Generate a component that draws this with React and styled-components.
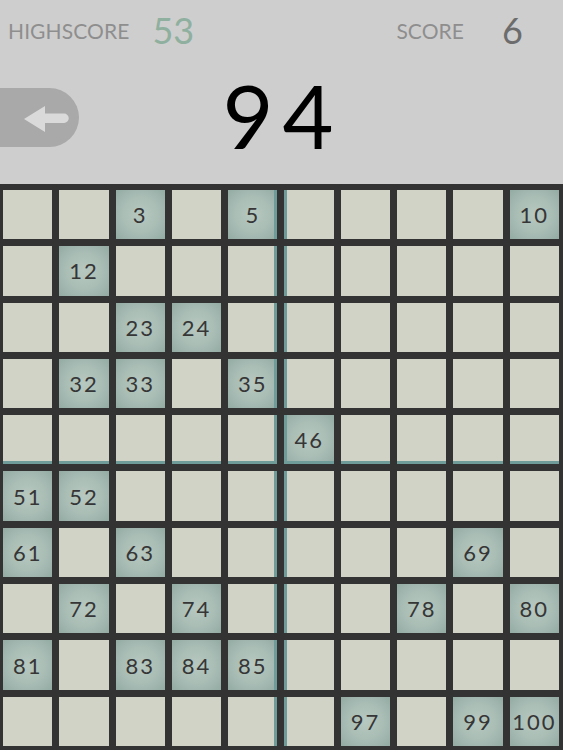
import React from "react";
import styled, { createGlobalStyle } from "styled-components";

const GlobalStyle = createGlobalStyle`
  html, body {
    margin: 0;
    padding: 0;
    background: #333333;
  }
  body {
    font-family: Lato, "Open Sans", sans-serif;
  }
`;

const found = [
  3, 5, 10, 12, 23, 24, 32, 33, 35, 46, 51, 52, 61, 63, 69, 72, 74, 78, 80,
  81, 83, 84, 85, 97, 99, 100,
];

function App() {
  const cells = [];
  for (let i = 1; i <= 100; i++) {
    const row = Math.floor((i - 1) / 10);
    const col = (i - 1) % 10;
    const on = found.includes(i);
    cells.push(
      <Cell
        key={i}
        $on={on}
        $right={col === 4}
        $left={col === 5}
        $bottom={row === 4}
      >
        {on ? i : ""}
      </Cell>
    );
  }
  return (
    <Page>
      <GlobalStyle />
      <Header>
        <ScoreRow>
          <ScoreGroup>
            <Label>HIGHSCORE</Label>
            <HighValue>53</HighValue>
          </ScoreGroup>
          <ScoreGroup $right>
            <Label>SCORE</Label>
            <ScoreValue>6</ScoreValue>
          </ScoreGroup>
        </ScoreRow>
        <TargetRow>
          <BackButton>
            <svg width="79" height="59" viewBox="0 0 79 59">
              <path
                d="M24 31 L45 18 L45 25.5 L64 25.5 A4.75 4.75 0 0 1 64 35 L45 35 L45 44 Z"
                fill="#dadada"
              />
            </svg>
          </BackButton>
          <Target>94</Target>
        </TargetRow>
      </Header>
      <Board>{cells}</Board>
    </Page>
  );
}

export default App;

const Page = styled.div`
  width: 563px;
  height: 750px;
  overflow: hidden;
  display: flex;
  flex-direction: column;
`;
const Header = styled.div`
  height: 184px;
  background: #cecece;
  display: flex;
  flex-direction: column;
`;
const ScoreRow = styled.div`
  height: 60px;
  display: flex;
  align-items: center;
  justify-content: space-between;
  padding: 0 40px 0 8px;
`;
const ScoreGroup = styled.div`
  display: flex;
  align-items: center;
  gap: ${(props) => (props.$right ? "38px" : "23px")};
`;
const Label = styled.span`
  font-family: Lato, "Open Sans", sans-serif;
  font-size: 21px;
  font-weight: 400;
  color: #8e8e8e;
  letter-spacing: 0.1px;
`;
const HighValue = styled.span`
  font-family: Lato, "Open Sans", sans-serif;
  font-size: 36px;
  font-weight: 400;
  color: #8fb09f;
`;
const ScoreValue = styled.span`
  font-family: Lato, "Open Sans", sans-serif;
  font-size: 36px;
  font-weight: 400;
  color: #6c6c6c;
`;
const TargetRow = styled.div`
  position: relative;
  flex: 1;
  display: flex;
  align-items: flex-start;
  justify-content: center;
`;
const BackButton = styled.div`
  position: absolute;
  left: 0;
  top: 28px;
  width: 79px;
  height: 59px;
  background: #a9a9a9;
  border-radius: 0 30px 30px 0;
  display: flex;
`;
const Target = styled.div`
  font-family: Lato, "Open Sans", sans-serif;
  font-size: 88px;
  font-weight: 400;
  line-height: 1;
  color: #000;
  letter-spacing: 9px;
  margin-top: 11px;
  margin-left: 2px;
`;
const Board = styled.div`
  flex: 1;
  background: #333333;
  padding: 6px 4px 4px 3px;
  display: grid;
  grid-template-columns: repeat(10, 1fr);
  grid-auto-rows: 49.3px;
  gap: 7px;
`;
const Cell = styled.div`
  display: flex;
  align-items: center;
  justify-content: center;
  font-family: Lato, "Open Sans", sans-serif;
  font-size: 22px;
  font-weight: 400;
  color: #363636;
  letter-spacing: 2px;
  background: ${(props) =>
    props.$on
      ? "radial-gradient(circle at 50% 50%, #b7c8c0 0%, #aabeb6 50%, #93aba3 100%)"
      : "#d0d3c5"};
  box-shadow: ${(props) => {
    const s = [];
    if (props.$right) s.push("inset -3px 0 0 #6f9b99");
    if (props.$left) s.push("inset 3px 0 0 #6f9b99");
    if (props.$bottom) s.push("inset 0 -3px 0 #6f9b99");
    return s.length ? s.join(", ") : "none";
  }};
`;
